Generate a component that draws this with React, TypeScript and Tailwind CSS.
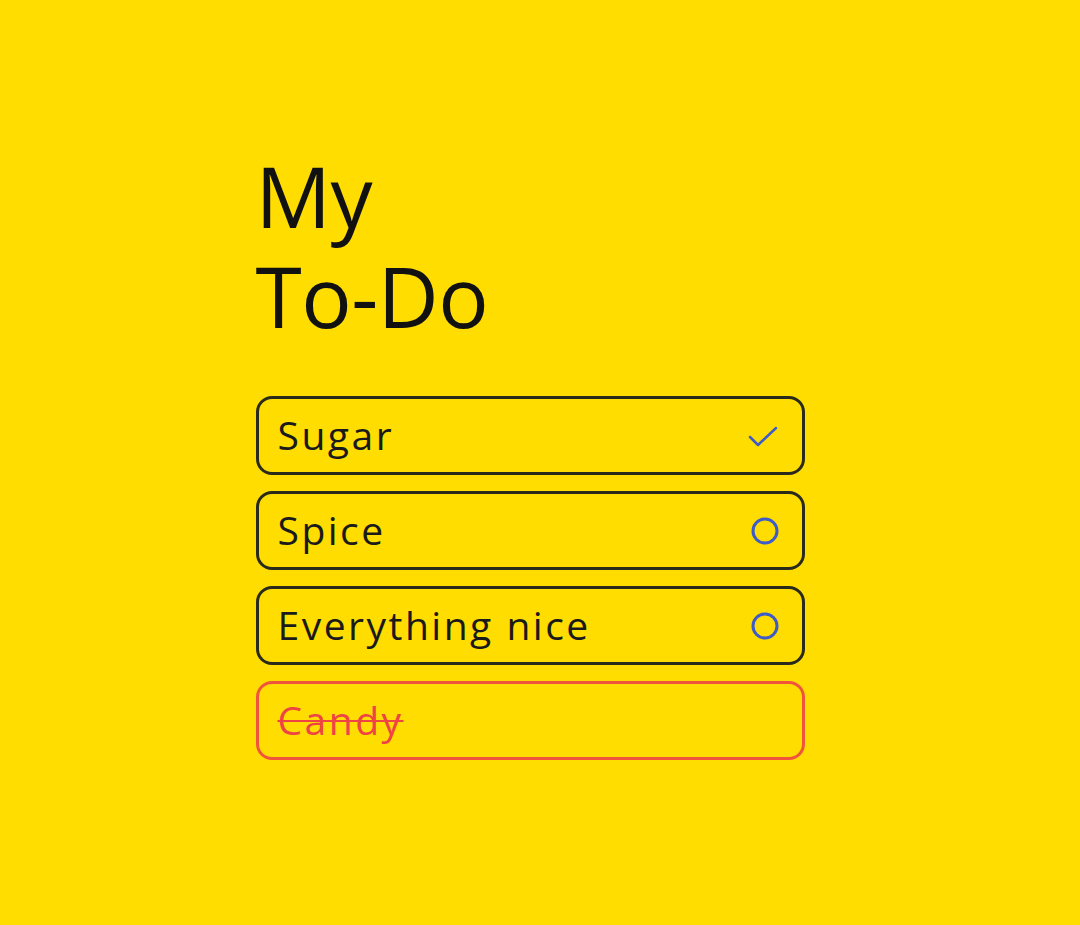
import React from 'react';

type Item = { label: string; state: 'done' | 'open' | 'removed' };

const items: Item[] = [
  { label: 'Sugar', state: 'done' },
  { label: 'Spice', state: 'open' },
  { label: 'Everything nice', state: 'open' },
  { label: 'Candy', state: 'removed' },
];

function Check() {
  return (
    <svg width="34" height="34" viewBox="0 0 34 34" fill="none">
      <path d="M4 18 L12 26 L30 9" stroke="#3d5bc9" strokeWidth="2.5" strokeLinecap="round" strokeLinejoin="round" />
    </svg>
  );
}

function Ring() {
  return (
    <svg width="30" height="30" viewBox="0 0 30 30" fill="none">
      <circle cx="15" cy="15" r="12" stroke="#3d5bc9" strokeWidth="3" />
    </svg>
  );
}

export default function App() {
  return (
    <div className="min-h-screen w-full bg-[#ffdd00] flex justify-center" style={{ fontFamily: '"Open Sans", Roboto, sans-serif' }}>
      <div className="w-[549px] pt-[146px] ml-[-20px]">
        <h1 className="text-[84px] leading-[100px] font-normal text-[#111] tracking-[-0.5px]">
          <div>My</div>
          <div>To-Do</div>
        </h1>
        <ul className="mt-[50px] flex flex-col gap-[16px]">
          {items.map((it) => (
            <li
              key={it.label}
              className={`h-[79px] rounded-[16px] border-[3px] flex items-center justify-between pl-[19px] pr-[22px] ${
                it.state === 'removed' ? 'border-[#f0553c]' : 'border-[#2a2a1a]'
              }`}
            >
              <span
                className={`text-[39px] font-normal tracking-[2.5px] ${
                  it.state === 'removed' ? 'text-[#ef4444] line-through decoration-2' : 'text-[#1a1a1a]'
                }`}
              >
                {it.label}
              </span>
              {it.state === 'done' && <Check />}
              {it.state === 'open' && <Ring />}
            </li>
          ))}
        </ul>
      </div>
    </div>
  );
}
